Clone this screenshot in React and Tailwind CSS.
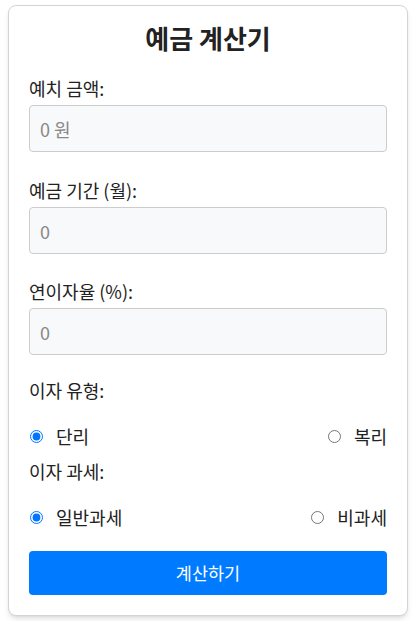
import { useState } from 'react';

const font = { fontFamily: '"Noto Sans CJK KR", sans-serif' };

const Field = ({ label, placeholder, value, onChange, className }) => (
    <div className={className}>
        <label className="block text-[18px] leading-6 text-[#222] mb-[5px]">{label}</label>
        <input
            type="number"
            value={value}
            onChange={(e) => onChange(e.target.value)}
            placeholder={placeholder}
            className="w-full h-[47px] px-[10px] bg-[#f8f9fa] border border-[#ccc] rounded-[4px] text-[18px] text-[#222] placeholder-[#888] focus:outline-none"
        />
    </div>
);

const Radio = ({ name, label, checked, onChange }) => (
    <label className="flex items-center gap-[13px] text-[18px] leading-6 text-[#222] cursor-pointer">
        <input
            type="radio"
            name={name}
            checked={checked}
            onChange={onChange}
            className="w-[13px] h-[13px] m-0 ml-[1px] accent-[#0075ff]"
        />
        {label}
    </label>
);

export default function App() {
    const [amount, setAmount] = useState('');
    const [months, setMonths] = useState('');
    const [rate, setRate] = useState('');
    const [type, setType] = useState('simple');
    const [tax, setTax] = useState('normal');

    return (
        <div className="bg-white min-h-screen px-2 pt-[5px]" style={font}>
            <div className="w-[400px] border border-[#d4d4d4] rounded-lg shadow-md bg-white px-5 pt-5 pb-5">
                <h2 className="text-[26px] leading-6 font-bold text-center text-[#222] mb-[26px]">예금 계산기</h2>

                <Field label="예치 금액:" placeholder="0 원" value={amount} onChange={setAmount} className="mb-[26px]" />
                <Field label="예금 기간 (월):" placeholder="0" value={months} onChange={setMonths} className="mb-[25px]" />
                <Field label="연이자율 (%):" placeholder="0" value={rate} onChange={setRate} className="mb-[23px]" />

                <div className="text-[18px] leading-6 text-[#222] mb-[22px]">이자 유형:</div>
                <div className="flex justify-between items-center mb-[11px]">
                    <Radio name="type" label="단리" checked={type === 'simple'} onChange={() => setType('simple')} />
                    <Radio name="type" label="복리" checked={type === 'compound'} onChange={() => setType('compound')} />
                </div>

                <div className="text-[18px] leading-6 text-[#222] mb-[22px]">이자 과세:</div>
                <div className="flex justify-between items-center mb-[22px]">
                    <Radio name="tax" label="일반과세" checked={tax === 'normal'} onChange={() => setTax('normal')} />
                    <Radio name="tax" label="비과세" checked={tax === 'none'} onChange={() => setTax('none')} />
                </div>

                <button className="w-full h-[44px] bg-[#007bff] text-white text-[17.5px] rounded-[4px]">계산하기</button>
            </div>
        </div>
    );
}
